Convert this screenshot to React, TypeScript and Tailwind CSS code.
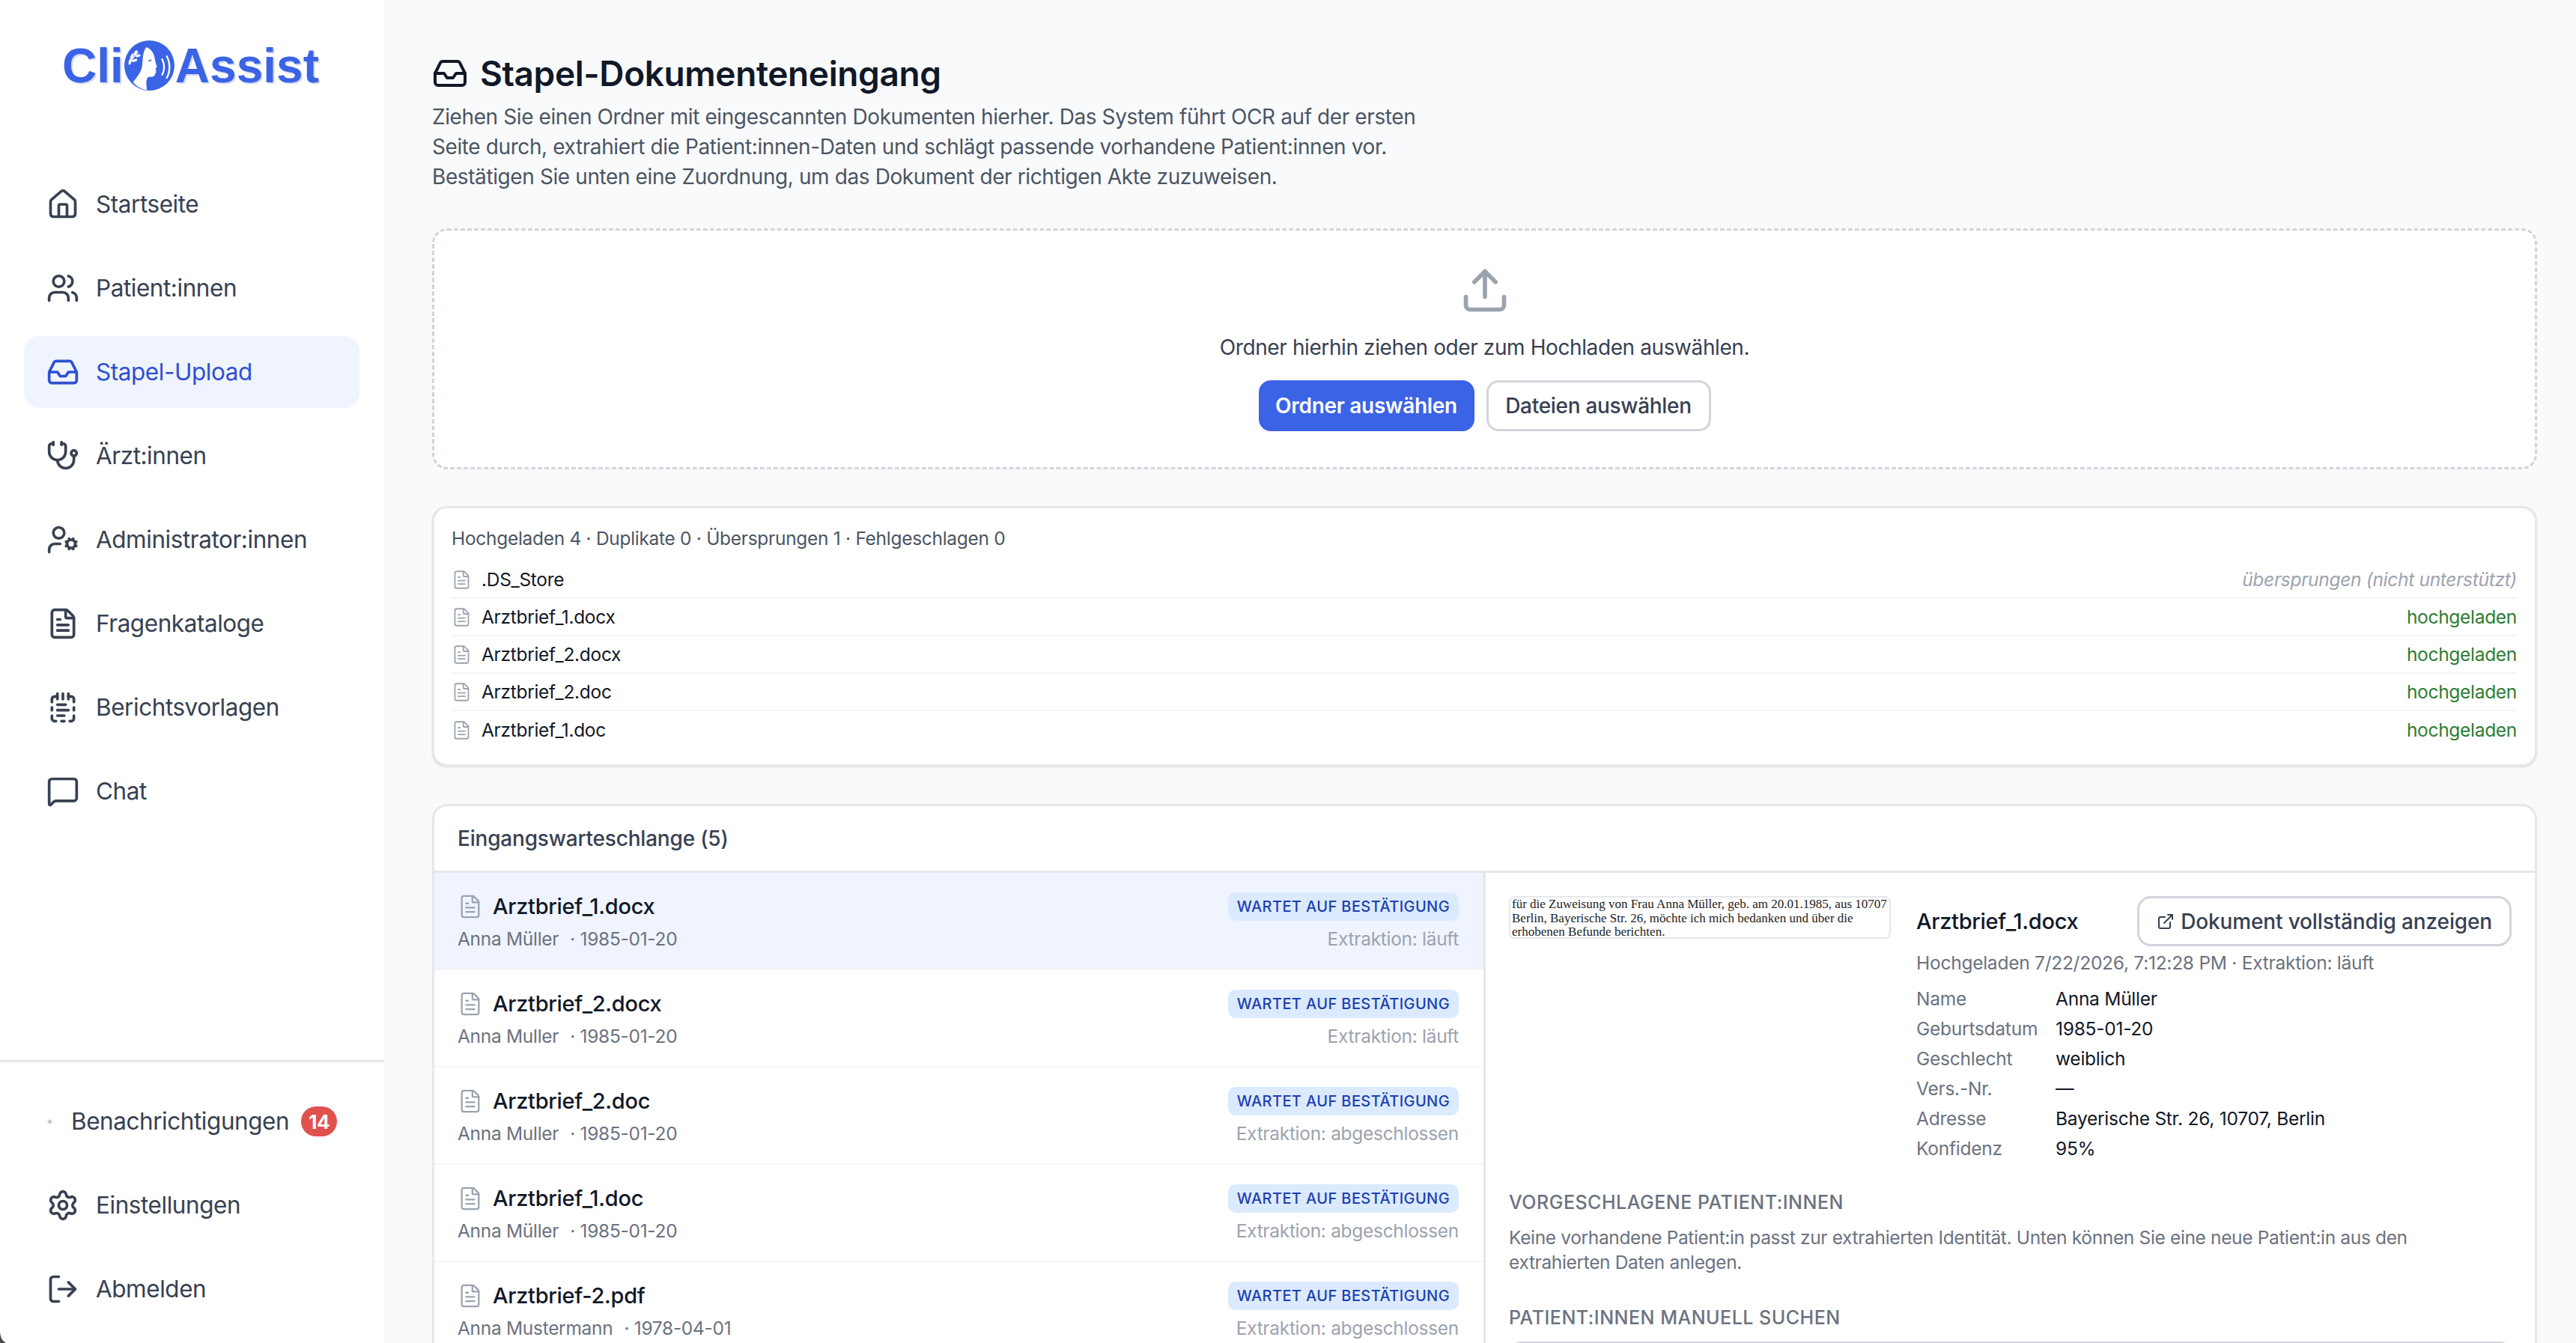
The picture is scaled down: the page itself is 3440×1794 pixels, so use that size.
import {
  House,
  Users,
  Inbox,
  Stethoscope,
  UserCog,
  FileText,
  NotepadTextDashed,
  MessageSquare,
  Settings,
  LogOut,
  Upload,
  ExternalLink,
} from 'lucide-react';

const navItems = [
  { label: 'Startseite', icon: House },
  { label: 'Patient:innen', icon: Users },
  { label: 'Stapel-Upload', icon: Inbox, active: true },
  { label: 'Ärzt:innen', icon: Stethoscope },
  { label: 'Administrator:innen', icon: UserCog },
  { label: 'Fragenkataloge', icon: FileText },
  { label: 'Berichtsvorlagen', icon: NotepadTextDashed },
  { label: 'Chat', icon: MessageSquare },
];

const uploadRows = [
  { name: '.DS_Store', skipped: true },
  { name: 'Arztbrief_1.docx' },
  { name: 'Arztbrief_2.docx' },
  { name: 'Arztbrief_2.doc' },
  { name: 'Arztbrief_1.doc' },
];

const queueRows = [
  { name: 'Arztbrief_1.docx', patient: 'Anna Müller', dob: '1985-01-20', status: 'Extraktion: läuft', selected: true },
  { name: 'Arztbrief_2.docx', patient: 'Anna Muller', dob: '1985-01-20', status: 'Extraktion: läuft' },
  { name: 'Arztbrief_2.doc', patient: 'Anna Muller', dob: '1985-01-20', status: 'Extraktion: abgeschlossen' },
  { name: 'Arztbrief_1.doc', patient: 'Anna Müller', dob: '1985-01-20', status: 'Extraktion: abgeschlossen' },
  { name: 'Arztbrief-2.pdf', patient: 'Anna Mustermann', dob: '1978-04-01', status: 'Extraktion: abgeschlossen' },
];

const details = [
  ['Name', 'Anna Müller'],
  ['Geburtsdatum', '1985-01-20'],
  ['Geschlecht', 'weiblich'],
  ['Vers.-Nr.', '—'],
  ['Adresse', 'Bayerische Str. 26, 10707, Berlin'],
  ['Konfidenz', '95%'],
];

function LogoMark() {
  return (
    <svg viewBox="0 0 196 196" className="mx-[1px] h-[67px] w-[67px] shrink-0">
      <circle cx="98" cy="98" r="98" fill="#3b63e6" />
      {/* face */}
      <path
        d="M86 26 C104 32 116 50 119 70 C120 80 125 96 128 104 L122 108 C124 116 126 123 122 128 C120 140 111 144 98 142 C90 142 86 153 86 168 L88 194 C66 190 48 180 34 163 C46 148 61 130 68 108 C74 83 68 48 86 26 Z"
        fill="#fff"
      />
      <path d="M90 80 L106 74 L104 82 Z" fill="#3b63e6" />
      {/* sound waves */}
      <path d="M148 74 C158 92 158 116 148 134" stroke="#fff" strokeWidth="7" fill="none" strokeLinecap="round" />
      <path d="M166 62 C180 88 180 122 166 146" stroke="#fff" strokeWidth="7" fill="none" strokeLinecap="round" />
      {/* laurel */}
      <path d="M18 92 C28 76 40 60 54 46" stroke="#fff" strokeWidth="4" fill="none" />
      <ellipse cx="30" cy="62" rx="5" ry="12" fill="#fff" transform="rotate(25 30 62)" />
      <ellipse cx="44" cy="48" rx="5" ry="11" fill="#fff" transform="rotate(30 44 48)" />
      <ellipse cx="22" cy="84" rx="5" ry="11" fill="#fff" transform="rotate(10 22 84)" />
      <ellipse cx="40" cy="78" rx="5" ry="11" fill="#fff" transform="rotate(70 40 78)" />
      <ellipse cx="54" cy="60" rx="5" ry="10" fill="#fff" transform="rotate(70 54 60)" />
    </svg>
  );
}

function Sidebar() {
  return (
    <aside className="flex h-full w-[512px] shrink-0 flex-col bg-white font-['Inter',sans-serif]">
      <div className="flex h-[225px] justify-center pr-[3px] pt-[54px]">
        <div className="flex h-[67px] items-center font-['Liberation_Sans',sans-serif] text-[64px] font-bold leading-none text-[#3b63e6] [text-shadow:2px_2px_0_#d3dbf3]">
          <span>Cli</span>
          <LogoMark />
          <span>Assist</span>
        </div>
      </div>

      <nav className="flex flex-col gap-4 px-8">
        {navItems.map((item) => (
          <div
            key={item.label}
            className={`flex h-24 items-center gap-[22px] rounded-[20px] pl-[30px] text-[31.5px] tracking-[-0.45px] ${
              item.active ? 'bg-[#eff4fe] text-[#2f50d0]' : 'text-[#374151]'
            }`}
          >
            <item.icon className="h-[44px] w-[44px] shrink-0" strokeWidth={2} />
            <span>{item.label}</span>
          </div>
        ))}
      </nav>

      <div className="mt-auto flex flex-col gap-4 border-t-[3px] border-[#e5e7eb] px-8 pb-[24px] pt-[31px]">
        <div className="flex h-24 items-center pl-[32px] text-[31.5px] tracking-[-0.45px] text-[#374151]">
          <span className="h-[5px] w-[5px] rotate-45 bg-[#c4c8cf]" />
          <span className="ml-[26px]">Benachrichtigungen</span>
          <span className="ml-[16px] flex h-10 w-12 items-center justify-center rounded-full bg-[#e0524e] text-[26px] font-bold text-white">
            14
          </span>
        </div>
        <div className="flex h-24 items-center gap-[22px] pl-[30px] text-[31.5px] tracking-[-0.45px] text-[#374151]">
          <Settings className="h-[44px] w-[44px]" />
          <span>Einstellungen</span>
        </div>
        <div className="flex h-24 items-center gap-[22px] pl-[30px] text-[31.5px] tracking-[-0.45px] text-[#374151]">
          <LogOut className="h-[44px] w-[44px]" />
          <span>Abmelden</span>
        </div>
      </div>
    </aside>
  );
}

function UploadSummary() {
  return (
    <section className="mt-[49px] rounded-[20px] border-[3px] border-[#e5e7eb] bg-white pb-[21px] pl-[23px] pr-[24px] pt-[22px] text-[24.5px] tracking-[-0.3px] shadow-sm">
      <p className="h-[49px] leading-[36px] text-[#4b5563]">
        Hochgeladen 4 · Duplikate 0 · Übersprungen 1 · Fehlgeschlagen 0
      </p>
      {uploadRows.map((row, i) => (
        <div
          key={row.name}
          className={`flex h-[50px] items-center justify-between ${i < 4 ? 'border-b-2 border-[#f3f4f6]' : ''}`}
        >
          <div className="flex items-center gap-[13px]">
            <FileText className="h-[27px] w-[27px] text-[#9ca3af]" strokeWidth={1.6} />
            <span className="text-[#111827]">{row.name}</span>
          </div>
          {row.skipped ? (
            <span className="italic text-[#9ca3af]">übersprungen (nicht unterstützt)</span>
          ) : (
            <span className="text-[#2e7d32]">hochgeladen</span>
          )}
        </div>
      ))}
    </section>
  );
}

function QueueList() {
  return (
    <div className="w-[1404px] shrink-0 border-r-[3px] border-[#e5e7eb]">
      {queueRows.map((row) => (
        <div
          key={row.name}
          className={`flex h-[130px] justify-between border-b-2 border-[#f3f4f6] pl-[31px] pr-[33px] pt-[26px] ${
            row.selected ? 'bg-[#eff4fe]' : ''
          }`}
        >
          <div>
            <div className="flex h-[38px] items-center gap-[13px]">
              <FileText className="h-[34px] w-[34px] text-[#9ca3af]" strokeWidth={1.6} />
              <span className="text-[29px] font-medium tracking-[-0.3px] text-[#111827]">{row.name}</span>
            </div>
            <p className="mt-[6px] text-[24.5px] tracking-[-0.3px] text-[#6b7280]">
              {row.patient}
              <span className="ml-[15px]">· {row.dob}</span>
            </p>
          </div>
          <div className="flex flex-col items-end">
            <span className="flex h-[38px] items-center rounded-[10px] bg-[#dbeafe] px-[12px] text-[20px] font-medium tracking-[0.4px] text-[#1e40af]">
              WARTET AUF BESTÄTIGUNG
            </span>
            <span className="mt-[6px] text-[24.5px] tracking-[-0.3px] text-[#9ca3af]">{row.status}</span>
          </div>
        </div>
      ))}
    </div>
  );
}

function DetailPane() {
  return (
    <div className="min-w-0 flex-1 pl-[31px] pr-[31px] pt-[31px]">
      <div className="flex gap-[34px]">
        <div className="h-[57px] w-[510px] shrink-0 overflow-hidden whitespace-nowrap rounded-[8px] border-2 border-[#e5e7eb] bg-white pl-[2px] font-['Liberation_Serif',serif] text-[17px] leading-[18.5px] text-[#222]">
          für die Zuweisung von Frau Anna Müller, geb. am 20.01.1985, aus 10707
          <br />
          Berlin, Bayerische Str. 26, möchte ich mich bedanken und über die
          <br />
          erhobenen Befunde berichten.
        </div>
        <div className="min-w-0 flex-1">
          <div className="flex items-center justify-between">
            <span className="text-[29px] font-medium tracking-[-0.3px] text-[#111827]">Arztbrief_1.docx</span>
            <button className="flex h-[67px] items-center gap-[8px] rounded-[18px] border-[3px] border-[#d1d5db] bg-white px-[23px] text-[28px] font-medium tracking-[-0.15px] text-[#374151]">
              <ExternalLink className="h-[24px] w-[24px]" />
              Dokument vollständig anzeigen
            </button>
          </div>
          <p className="mt-[6px] text-[24.5px] leading-[32px] tracking-[-0.25px] text-[#6b7280]">
            Hochgeladen 7/22/2026, 7:12:28 PM · Extraktion: läuft
          </p>
          <div className="mt-[12px] grid grid-cols-[186px_1fr] text-[24.5px] leading-[40px] tracking-[-0.25px]">
            {details.map(([label, value]) => (
              <div key={label} className="contents">
                <span className="text-[#6b7280]">{label}</span>
                <span className="text-[#111827]">{value}</span>
              </div>
            ))}
          </div>
        </div>
      </div>
      <h3 className="mt-[35px] text-[25px] font-medium uppercase leading-[34px] tracking-[0.5px] text-[#6b7280]">
        Vorgeschlagene Patient:innen
      </h3>
      <p className="mt-[14px] text-[24.5px] leading-[33px] tracking-[-0.35px] text-[#6b7280]">
        Keine vorhandene Patient:in passt zur extrahierten Identität. Unten können Sie eine neue Patient:in aus den
        <br />
        extrahierten Daten anlegen.
      </p>
      <h3 className="mt-[40px] text-[25px] font-medium uppercase leading-[34px] tracking-[0.5px] text-[#6b7280]">
        Patient:innen manuell suchen
      </h3>
      <div className="mt-[15px] h-[70px] rounded-[16px] border-[3px] border-[#d1d5db] bg-white" />
    </div>
  );
}

export default function App() {
  return (
    <div className="relative flex h-screen w-full overflow-hidden bg-[#f9fafb] font-['Inter',sans-serif]">
      <Sidebar />
      <main className="min-w-0 flex-1 pl-[65px] pr-[52px] pt-[74px]">
        <h1 className="flex h-[48px] items-center gap-[16px] text-[46px] font-semibold tracking-[-0.4px] text-[#111827]">
          <Inbox className="h-[48px] w-[48px]" />
          Stapel-Dokumenteneingang
        </h1>
        <p className="mt-[14px] whitespace-nowrap text-[28px] leading-[40px] tracking-[-0.4px] text-[#4b5563]">
          Ziehen Sie einen Ordner mit eingescannten Dokumenten hierher. Das System führt OCR auf der ersten
          <br />
          Seite durch, extrahiert die Patient:innen-Daten und schlägt passende vorhandene Patient:innen vor.
          <br />
          Bestätigen Sie unten eine Zuordnung, um das Dokument der richtigen Akte zuzuweisen.
        </p>

        <section className="mt-[49px] flex h-[322px] flex-col items-center rounded-[20px] border-[3px] border-dashed border-[#d1d5db] bg-white pt-[46px]">
          <Upload className="h-[68px] w-[68px] text-[#9ca3af]" />
          <p className="mt-[22px] text-[28px] leading-[40px] tracking-[-0.4px] text-[#374151]">
            Ordner hierhin ziehen oder zum Hochladen auswählen.
          </p>
          <div className="mt-[24px] flex gap-4">
            <button className="h-[68px] w-[288px] rounded-[16px] bg-[#3b63e6] text-[28px] font-semibold tracking-[-0.3px] text-white">
              Ordner auswählen
            </button>
            <button className="h-[68px] w-[300px] rounded-[16px] border-[3px] border-[#d1d5db] bg-white text-[28px] font-medium tracking-[-0.3px] text-[#374151]">
              Dateien auswählen
            </button>
          </div>
        </section>

        <UploadSummary />

        <section className="mt-[50px] rounded-t-[20px] border-[3px] border-[#e5e7eb] bg-white">
          <div className="flex h-[89px] items-center border-b-[3px] border-[#e5e7eb] px-[31px] text-[28px] font-medium tracking-[-0.2px] text-[#374151]">
            Eingangswarteschlange (5)
          </div>
          <div className="flex">
            <QueueList />
            <DetailPane />
          </div>
        </section>
      </main>
      {/* rounded window corner of the capture */}
      <svg className="absolute bottom-0 left-0 h-[14px] w-[8px]" viewBox="0 0 8 14">
        <path d="M0 0 C1 7 3 11 8 14 L0 14 Z" fill="#4b4b4b" />
      </svg>
    </div>
  );
}
